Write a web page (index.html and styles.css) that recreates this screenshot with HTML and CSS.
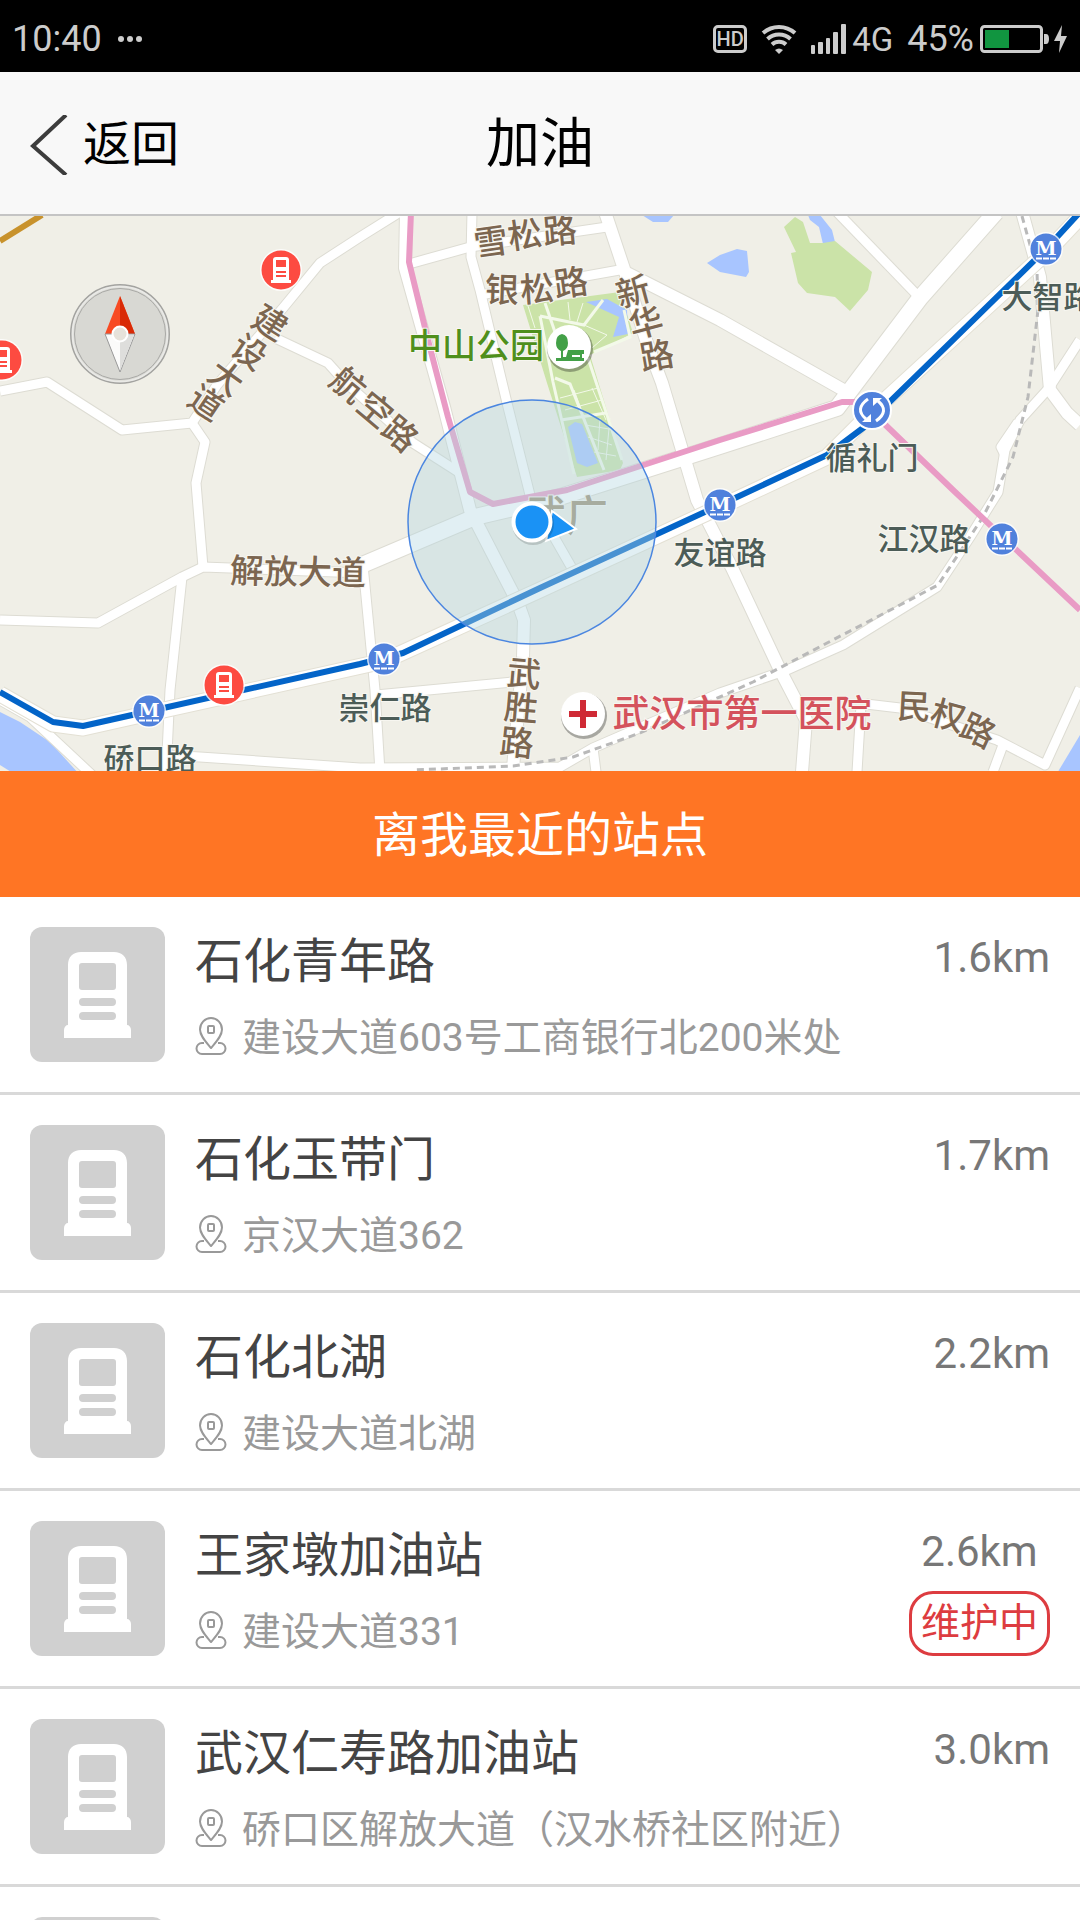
FILE: index.html
```html
<!DOCTYPE html>
<html lang="zh-CN">
<head>
  <meta charset="UTF-8" />
  <meta name="viewport" content="width=device-width, initial-scale=1.0" />
  <title>加油</title>
  <link rel="stylesheet" href="styles.css">
</head>
<body>

  <!-- shared icons -->
  <svg class="sprite" aria-hidden="true">
    <symbol id="icon-pump" viewBox="0 0 67 86">
      <path fill="currentColor" fill-rule="evenodd" d="M4 13C4 5 9 0 17 0h33c8 0 13 5 13 13v60c2 0 4 2 4 5v8H0v-8c0-3 2-5 4-5zM18 11q-3 0-3 3v21q0 3 3 3h31q3 0 3-3V14q0-3-3-3zM19 46a4 4 0 0 0 0 8h29a4 4 0 0 0 0-8zM19 60a4 4 0 0 0 0 8h29a4 4 0 0 0 0-8z"/>
    </symbol>
    <symbol id="icon-pin" viewBox="0 0 32 38">
      <g fill="none" stroke="currentColor" stroke-width="2" stroke-linejoin="round">
        <path d="M16 31C11 25 5 19 5 12.500a11 11.500 0 0 1 22 0C27 19 21 25 16 31z"/>
        <rect x="13" y="9" width="6" height="7" rx="1"/>
        <path d="M9 26H7a5.500 5.500 0 0 0 0 11h18a5.500 5.500 0 0 0 0-11h-2"/>
      </g>
    </symbol>
    <symbol id="marker-pump" viewBox="0 0 44 44">
      <circle cx="22" cy="22" r="21" fill="#fff" opacity=".8"/>
      <circle cx="22" cy="22" r="19.500" fill="#fd4b41"/>
      <path fill="#fff" fill-rule="evenodd" d="M14 12q0-3 3-3h10q3 0 3 3v20h2v3H12v-3h2zM17 12v7h10v-7zM17 23v2h10v-2zM17 27v2h10v-2z"/>
    </symbol>
    <symbol id="marker-metro" viewBox="0 0 34 34">
      <circle cx="17" cy="17" r="17" fill="#fff" opacity=".8"/>
      <circle cx="17" cy="17" r="15.500" fill="#5081dc"/>
      <text x="17" y="23" class="metro-m">M</text>
      <path d="M7 26.500h20" stroke="#fff" stroke-width="2" stroke-dasharray="6 1"/>
    </symbol>
  </svg>

  <div class="app">
    <div class="status-bar">
      <div class="status-side">
        <span>10:40</span>
        <svg width="26" height="8" viewBox="-2 0 26 8" fill="currentColor"><circle cx="3" cy="4" r="3"/><circle cx="12" cy="4" r="3"/><circle cx="21" cy="4" r="3"/></svg>
      </div>
      <div class="status-side">
        <span class="hd">HD</span>
        <svg width="36" height="30" viewBox="0 0 36 30" fill="none" stroke="currentColor" stroke-width="4">
          <path d="M2 9a24 24 0 0 1 32 0M6.500 15a17 17 0 0 1 23 0M11 20.500a10.500 10.500 0 0 1 14 0"/>
          <path d="M14 26q4-3 8 0l-4 4z" fill="currentColor" stroke="none"/>
        </svg>
        <div class="signal">
          <svg width="35" height="30" viewBox="0 0 35 30" fill="currentColor">
            <rect x="0" y="21" width="4" height="9" rx="1"/><rect x="7" y="18" width="5" height="12" rx="1"/><rect x="15" y="14" width="4" height="16" rx="1"/><rect x="22" y="8" width="5" height="22" rx="1"/><rect x="30" y="0" width="5" height="30" rx="1"/>
          </svg>
          <span class="network">4G</span>
        </div>
        <div class="signal">
          <span>45%</span>
          <svg width="88" height="30" viewBox="0 0 88 30">
            <rect x="1.500" y="2.500" width="60" height="25" rx="3" fill="none" stroke="currentColor" stroke-width="3"/>
            <rect x="5" y="6" width="24" height="18" fill="#119540"/>
            <path d="M64 10h2q3 0 3 5t-3 5h-2zM82 1L74 17h6l-1 12 8-17h-6z" fill="currentColor"/>
          </svg>
        </div>
      </div>
    </div>

    <header class="nav-bar">
      <a class="back" href="#">
        <svg width="38" height="60" viewBox="0 0 38 60" fill="none" stroke="#3c3c3c" stroke-width="4"><path d="M36 0L3 31l33 29"/></svg>
        返回
      </a>
      <h1>加油</h1>
    </header>

    <svg class="map" viewBox="0 216 1080 555" role="img" aria-label="地图">
      <defs>
        <g id="roads">
          <path d="M0 391L47 382 122 430 192 423 217 385 283 308 320 263 360 237 400 212"/>
          <path d="M192 423L205 442 196 483 203 567"/>
          <path d="M275 338L328 363 345 382 413 443 460 473"/>
          <path d="M0 620L98 623 182 577 203 567 230 568 362 573"/>
          <path d="M182 577L170 690 166 775"/>
          <path d="M166 755L200 757 360 768 560 767 593 748 720 693 787 670 843 645 937 587 970 537 998 492 1005 450 1020 420 1049 388 1080 340"/>
          <path d="M1005 455L1001 447 1018 422"/>
          <path d="M363 565L375 690 380 772"/>
          <path d="M376 695L512 682"/>
          <path d="M0 700L30 717 92 775"/>
          <path d="M472 212L471 257 480 290 507 403 530 495 573 570"/>
          <path d="M409 264L470 247 607 227M480 295L625 269"/>
          <path d="M837 212L920 298"/>
          <path d="M866 704L900 708 997 740 1045 765 1080 688"/>
          <path d="M861 705L857 772M1003 745L993 772M593 748L596 772"/>
        </g>
        <g id="main-roads">
          <path d="M406 212L405 268 444 407 470 510 518 603 524 620 523 657 513 768"/>
          <path d="M605 212L625 272 720 320 847 392"/>
          <path d="M625 272L647 343 662 383 697 500 732 568 780 670 806 720 802 772"/>
          <path d="M1022 212L1040 277 1050 390 1067 413 1080 425"/>
        </g>
        <g id="avenues">
          <path d="M362 565L475 517 560 497 720 446 837 408 852 388 920 298 996 212"/>
        </g>
      </defs>

      <rect y="216" width="1080" height="555" fill="#f0efe7"/>

      <!-- water and green areas -->
      <g fill="#a8c5ff">
        <path d="M0 712L20 722 50 742 80 775H16L0 765z"/>
        <path d="M1080 735V775H1056z"/>
        <path d="M642 215L653 222H668L674 215z"/>
        <path d="M707 263L720 255 737 249 747 251 749 272 746 277 720 272z"/>
        <path d="M808 215H820L832 230 835 242 823 244 819 227 810 220z"/>
      </g>
      <path fill="#cbe3a8" d="M784 227L795 217 803 222 810 243 823 243 835 241 872 272 868 290 850 311 835 297 807 293 798 283 791 253 796 252z"/>
      <path fill="#cbe3a8" d="M523 305L620 292 633 333 590 355 623 463 620 470 577 477 547 383z"/>
      <path fill="#a8c5ff" d="M586 302L607 299 627 310 628 334 613 337 619 317zM568 427L575 422 582 424 598 463 587 467 577 463z"/>
      <path fill="none" stroke="#f3f9e9" stroke-width="3" d="M540 316L584 325 603 300M624 310L630 337 594 352M540 316L553 382 574 474M555 378L570 384 604 470M588 358L622 460M561 420L606 413M545 303L556 335"/>
      <path fill="none" stroke="#f3f9e9" stroke-width="1" d="M584 325L607 335 592 348M568 302L570 320M583 303L577 322M528 306L535 328M560 398L598 388M565 410L602 400M574 390L585 420M592 388L606 420M585 425L615 430M588 437L612 445M600 418L598 450M610 418L606 460M594 452L616 456"/>

      <!-- streets: casing first, surface on top -->
      <use href="#roads" class="road" stroke="#dddcd3" stroke-width="11"/>
      <use href="#main-roads" class="road" stroke="#dddcd3" stroke-width="14"/>
      <use href="#avenues" class="road" stroke="#dddcd3" stroke-width="18"/>
      <use href="#roads" class="road" stroke="#fff" stroke-width="9"/>
      <use href="#main-roads" class="road" stroke="#fff" stroke-width="12"/>
      <use href="#avenues" class="road" stroke="#fff" stroke-width="16"/>
      <path class="road" stroke="#c8922c" stroke-width="6" d="M0 241L42 215"/>
      <path class="road" stroke="#b9b9b9" stroke-width="3" stroke-dasharray="7 5" d="M1022 216L1037 270 1038 310 1028 397 1013 457 983 517 938 585 900 605 827 643 753 682 640 733 573 757 513 766 413 770"/>

      <!-- metro lines -->
      <path class="road" stroke="#e99bc5" stroke-width="6" d="M411 212L409 262 428 340 448 417 470 492 493 504 567 490 720 440 842 402 872 402M872 412L953 490 1080 610"/>
      <path class="road" stroke="#e3e0d4" stroke-width="17" d="M0 694L53 724 83 728 150 713 384 661 540 590 720 507 827 457 872 412 1047 252 1080 217"/>
      <path class="road" stroke="#fff" stroke-width="15" d="M0 694L53 724 83 728 150 713 384 661 540 590 720 507 827 457 872 412 1047 252 1080 217"/>
      <path class="road" stroke="#0364c8" stroke-width="6" d="M0 692L53 722 83 726 150 711 360 664 403 653 540 588 720 505 827 455 863 428 1047 248 1080 212"/>

      <!-- street names -->
      <g class="label street">
        <text transform="translate(270 323) rotate(32)" y="12">建</text>
        <text transform="translate(249 352) rotate(34)" y="12">设</text>
        <text transform="translate(226 378) rotate(36)" y="12">大</text>
        <text transform="translate(206 403) rotate(34)" y="12">道</text>
        <text transform="translate(348 385) rotate(40)" y="12">航</text>
        <text transform="translate(375 410) rotate(40)" y="12">空</text>
        <text transform="translate(400 434) rotate(40)" y="12">路</text>
        <text transform="translate(491 242) rotate(-8)" y="12">雪</text>
        <text transform="translate(525 235) rotate(-8)" y="12">松</text>
        <text transform="translate(560 231) rotate(-5)" y="12">路</text>
        <text transform="translate(502 290) rotate(2)" y="12">银</text>
        <text transform="translate(537 289) rotate(-4)" y="12">松</text>
        <text transform="translate(571 283) rotate(-8)" y="12">路</text>
        <text transform="translate(633 292) rotate(-15)" y="12">新</text>
        <text transform="translate(646 323) rotate(-15)" y="12">华</text>
        <text transform="translate(657 356) rotate(-10)" y="12">路</text>
        <text transform="translate(524 674) rotate(5)" y="12">武</text>
        <text transform="translate(521 708) rotate(5)" y="12">胜</text>
        <text transform="translate(517 743) rotate(6)" y="12">路</text>
        <text transform="translate(914 707) rotate(3)" y="12">民</text>
        <text transform="translate(948 716) rotate(15)" y="12">权</text>
        <text transform="translate(978 731) rotate(25)" y="12">路</text>
        <text transform="translate(298 572) rotate(1)" y="12">解放大道</text>
      </g>
      <text class="label district" x="566" y="531">武广</text>
      <text class="label park" x="476" y="358">中山公园</text>
      <text class="label hospital" x="742" y="727">武汉市第一医院</text>
      <g class="label station-name">
        <text x="1048" y="308">大智路</text>
        <text x="872" y="469">循礼门</text>
        <text x="924" y="550">江汉路</text>
        <text x="720" y="564">友谊路</text>
        <text x="385" y="719">崇仁路</text>
        <text x="150" y="770">硚口路</text>
      </g>

      <!-- points of interest -->
      <g>
        <circle cx="570" cy="349" r="23" fill="#000" opacity=".3"/>
        <circle cx="569" cy="347" r="22" fill="#fff"/>
        <path fill="#43a047" d="M556 343q0-8 6-9 6 1 6 9 0 6-5 8v6h3l2-7h16v4h-2v4h2v3h-28v-3h5v-7q-5-2-5-8z"/>
        <path stroke="#fff" stroke-width="2" d="M572 356h8"/>
        <circle cx="584" cy="716" r="23" fill="#000" opacity=".3"/>
        <circle cx="583" cy="714" r="22" fill="#fff"/>
        <path stroke="#cf2a35" stroke-width="6" d="M569 714h28M583 700v28"/>
      </g>
      <use href="#marker-metro" x="1029" y="232" width="34" height="34"/>
      <use href="#marker-metro" x="703" y="488" width="34" height="34"/>
      <use href="#marker-metro" x="367" y="642" width="34" height="34"/>
      <use href="#marker-metro" x="132" y="694" width="34" height="34"/>
      <use href="#marker-metro" x="985" y="522" width="34" height="34"/>
      <g fill="none" stroke="#fff" stroke-width="3">
        <circle cx="872" cy="410" r="19" fill="#5081dc" stroke-width="2"/>
        <path d="M868 399q-14 10-2 20M876 421q14-10 2-20"/>
        <path d="M862 422h9v-8zM882 398h-9v8z" fill="#fff" stroke="none"/>
      </g>
      <use href="#marker-pump" x="259" y="248" width="44" height="44"/>
      <use href="#marker-pump" x="-20" y="338" width="44" height="44"/>
      <use href="#marker-pump" x="202" y="663" width="44" height="44"/>

      <!-- my position -->
      <ellipse cx="532" cy="522" rx="124" ry="122" fill="#b4d8e0" fill-opacity=".4" stroke="#4b86e0" stroke-width="1.500"/>
      <path d="M552 511L576 529 546 541z" fill="#1a92f5" stroke="#fff" stroke-width="2"/>
      <circle cx="533" cy="524" r="21" fill="#000" opacity=".15"/>
      <circle cx="532" cy="522" r="18.500" fill="#1a92f5" stroke="#fff" stroke-width="4"/>

      <!-- compass -->
      <circle cx="120" cy="334" r="49" fill="#d8d8d3" stroke="#a3a3a0" stroke-width="2"/>
      <circle cx="120" cy="334" r="45.500" fill="none" stroke="#a9a9a6" stroke-width="1"/>
      <circle cx="120" cy="334" r="47.500" fill="none" stroke="#e9e9e6" stroke-width="2"/>
      <path d="M120 296L105 334h30z" fill="#f84a22"/>
      <path d="M120 296L135 334h-15z" fill="#d92a06"/>
      <path d="M120 372L105 334h30z" fill="#fbfbfa" stroke="#999" stroke-width="1"/>
      <path d="M120 371L134 335h-14z" fill="#dededc"/>
      <circle cx="120" cy="334" r="7.500" fill="#e6e2da" stroke="#fff" stroke-width="2"/>
    </svg>

    <h2 class="list-title">离我最近的站点</h2>

    <ul class="station-list">
      <li>
        <a class="station" href="#">
          <span class="thumb"><svg><use href="#icon-pump"/></svg></span>
          <div class="info">
            <h3>石化青年路</h3>
            <p><svg><use href="#icon-pin"/></svg>建设大道603号工商银行北200米处</p>
          </div>
          <div class="side"><span class="distance">1.6km</span></div>
        </a>
      </li>
      <li>
        <a class="station" href="#">
          <span class="thumb"><svg><use href="#icon-pump"/></svg></span>
          <div class="info">
            <h3>石化玉带门</h3>
            <p><svg><use href="#icon-pin"/></svg>京汉大道362</p>
          </div>
          <div class="side"><span class="distance">1.7km</span></div>
        </a>
      </li>
      <li>
        <a class="station" href="#">
          <span class="thumb"><svg><use href="#icon-pump"/></svg></span>
          <div class="info">
            <h3>石化北湖</h3>
            <p><svg><use href="#icon-pin"/></svg>建设大道北湖</p>
          </div>
          <div class="side"><span class="distance">2.2km</span></div>
        </a>
      </li>
      <li>
        <a class="station" href="#">
          <span class="thumb"><svg><use href="#icon-pump"/></svg></span>
          <div class="info">
            <h3>王家墩加油站</h3>
            <p><svg><use href="#icon-pin"/></svg>建设大道331</p>
          </div>
          <div class="side">
            <span class="distance">2.6km</span>
            <span class="badge">维护中</span>
          </div>
        </a>
      </li>
      <li>
        <a class="station" href="#">
          <span class="thumb"><svg><use href="#icon-pump"/></svg></span>
          <div class="info">
            <h3>武汉仁寿路加油站</h3>
            <p><svg><use href="#icon-pin"/></svg>硚口区解放大道（汉水桥社区附近）</p>
          </div>
          <div class="side"><span class="distance">3.0km</span></div>
        </a>
      </li>
      <li>
        <a class="station" href="#" aria-label="加油站">
          <span class="thumb"><svg><use href="#icon-pump"/></svg></span>
        </a>
      </li>
    </ul>
  </div>

</body>
</html>
```
FILE: styles.css
```css
:root {
  --accent: #ff7524;
  --line: #d9d9d9;
  --text: #444;
  --muted: #999;
  --danger: #dd3c40;
}

* {
  box-sizing: border-box;
}

body {
  margin: 0;
  font-family: Roboto, "Noto Sans CJK SC", sans-serif;
  font-weight: 400;
  background: #fff;
  color: var(--text);
}

h1, h2, h3, p, ul {
  margin: 0;
  padding: 0;
  font-weight: 400;
}

a {
  color: inherit;
  text-decoration: none;
}

.sprite {
  display: none;
}

.app {
  display: flex;
  flex-direction: column;
  height: 100vh;
}

/* status bar */
.status-bar {
  display: flex;
  flex: none;
  justify-content: space-between;
  align-items: center;
  height: 72px;
  padding: 6px 12px 0;
  background: #000;
  color: #ccc;
  font-size: 36px;
}

.status-side {
  display: flex;
  align-items: center;
  gap: 14px;
}

.signal {
  display: flex;
  align-items: center;
  gap: 6px;
}

.hd {
  width: 34px;
  border: 3px solid #ccc;
  border-radius: 5px;
  font-size: 20px;
  font-weight: 500;
  line-height: 22px;
  text-align: center;
}

.network {
  font-size: 33px;
}

/* nav bar */
.nav-bar {
  display: grid;
  flex: none;
  grid-template-columns: 1fr auto 1fr;
  align-items: center;
  height: 144px;
  padding: 4px 30px 0;
  border-bottom: 2px solid #c4c4c4;
  background: #f8f8f8;
  color: #000;
  line-height: 60px;
}

.back {
  display: flex;
  align-items: center;
  gap: 15px;
  font-size: 48px;
}

.nav-bar h1 {
  font-size: 54px;
}

/* map */
.map {
  display: block;
  flex: none;
  width: 100%;
  height: auto;
}

.road {
  fill: none;
  stroke-linejoin: round;
}

.label {
  font-family: "Noto Sans CJK SC", sans-serif;
  font-weight: 500;
  text-anchor: middle;
  paint-order: stroke;
  stroke: #f7f6f0;
  stroke-width: 2px;
}

.street {
  font-size: 34px;
  fill: #7c6650;
}

.district {
  font-size: 42px;
  fill: #9f8f74;
}

.park {
  font-size: 34px;
  fill: #4f8f1c;
}

.hospital {
  font-size: 37px;
  fill: #d4525c;
}

.station-name {
  font-size: 31px;
  fill: #4c5c57;
}

.metro-m {
  font-family: "DejaVu Serif", serif;
  font-size: 19px;
  font-weight: 700;
  text-anchor: middle;
  fill: #fff;
}

/* station list */
.list-title {
  flex: none;
  padding-top: 4px;
  background: var(--accent);
  color: #fff;
  font-size: 48px;
  line-height: 122px;
  text-align: center;
}

.station-list {
  flex: 1;
  min-height: 0;
  overflow-y: auto;
  scrollbar-width: none;
  list-style: none;
}

.station {
  display: flex;
  gap: 30px;
  padding: 30px;
  border-bottom: 3px solid var(--line);
}

.thumb {
  display: flex;
  flex: none;
  justify-content: center;
  align-items: center;
  width: 135px;
  height: 135px;
  border-radius: 12px;
  background: #d0d0d0;
  color: #fff;
}

.thumb svg {
  width: 67px;
  height: 86px;
}

.info {
  flex: 1;
  min-width: 0;
}

.info h3 {
  font-size: 48px;
  line-height: 70px;
}

.info p {
  display: flex;
  align-items: center;
  gap: 15px;
  margin-top: 17px;
  color: var(--muted);
  font-size: 39px;
  line-height: 48px;
}

.info p svg {
  width: 32px;
  height: 38px;
  margin-bottom: 4px;
}

.side {
  display: flex;
  flex: none;
  flex-direction: column;
  align-items: center;
  gap: 8px;
  height: 135px;
}

.distance {
  color: #777;
  font-size: 42px;
  line-height: 62px;
}

.badge {
  padding: 0 9px;
  border: 3px solid var(--danger);
  border-radius: 24px;
  color: var(--danger);
  font-size: 39px;
  line-height: 59px;
}
```
